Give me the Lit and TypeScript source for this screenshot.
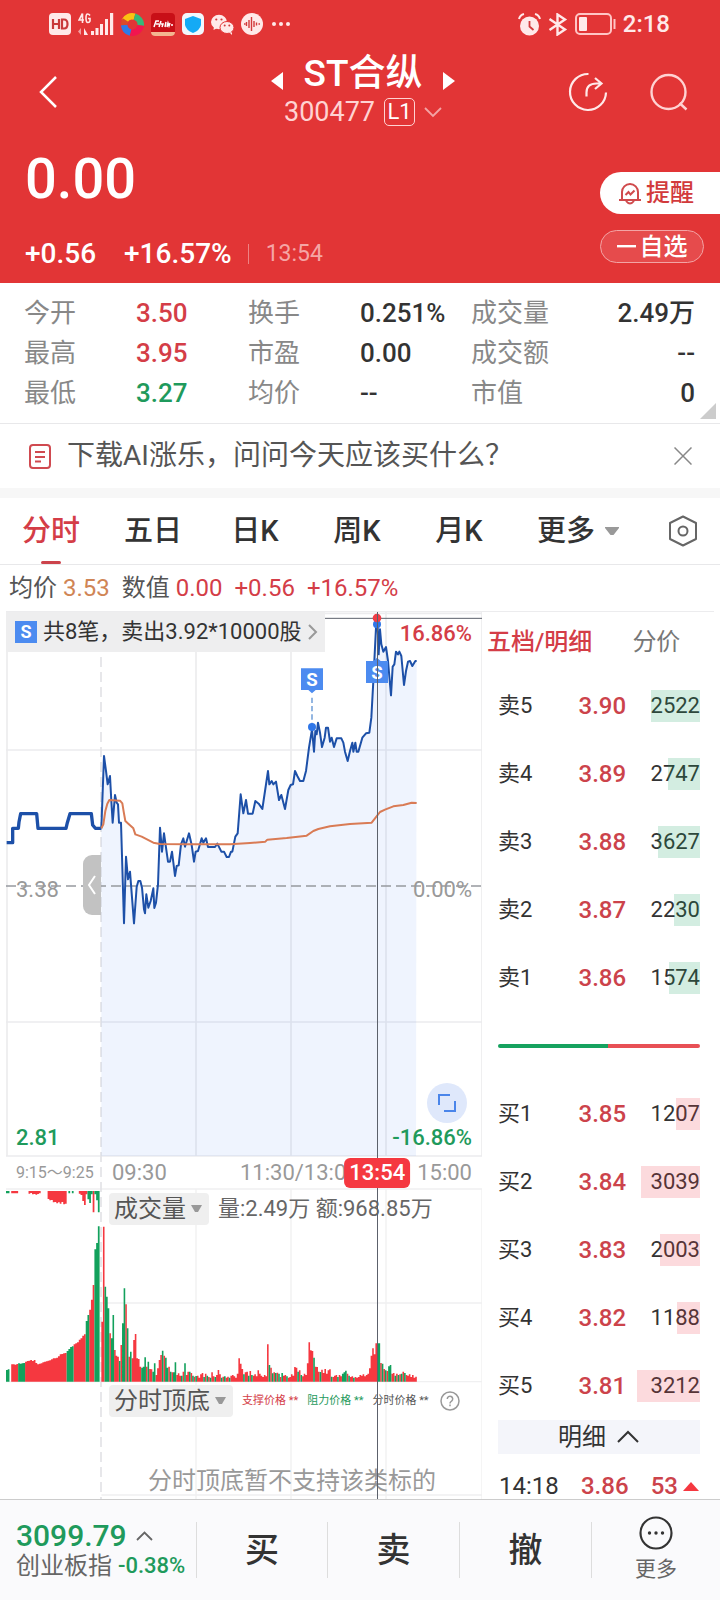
import { LitElement, html, css, svg } from "lit";
import { customElement, property, state } from "lit/decorators.js";
import { classMap } from "lit/directives/class-map.js";

type Pt = [number, number];

// Chart units: three per CSS pixel at the default width.
const AUCTION: Pt[] = [
  [20, 725], [38, 725], [38, 682], [55, 682], [57, 663], [62, 638], [110, 638], [114, 682],
  [198, 682], [202, 665], [210, 638], [274, 638], [278, 672], [286, 682], [304, 682],
];
const PRICE: Pt[] = [
  [304, 682], [312, 465], [318, 510], [323, 550], [330, 525], [334, 600], [338, 665], [345, 582],
  [350, 605], [354, 610], [357, 665], [363, 665], [372, 967], [378, 767], [384, 835], [390, 812],
  [402, 967], [410, 858], [415, 840], [421, 840], [426, 860], [432, 925], [435, 937], [439, 880],
  [445, 920], [452, 900], [460, 862], [463, 921], [468, 905], [474, 850], [480, 680], [486, 752],
  [492, 697], [498, 740], [504, 782], [510, 782], [516, 752], [525, 825], [530, 795], [536, 793],
  [543, 730], [550, 712], [555, 737], [567, 697], [575, 732], [582, 782], [587, 752], [594, 750],
  [605, 712], [610, 725], [618, 712], [624, 738], [645, 738], [652, 728], [664, 752], [672, 752],
  [680, 768], [687, 768], [693, 752], [697, 752], [706, 707], [713, 697], [722, 580], [730, 637],
  [738, 597], [744, 638], [758, 638], [766, 600], [776, 608], [787, 624], [804, 510], [808, 550],
  [815, 540], [820, 550], [828, 542], [837, 597], [844, 582], [848, 597], [855, 624], [865, 567],
  [872, 552], [879, 550], [885, 510], [892, 525], [900, 540], [910, 540], [918, 510], [927, 440],
  [936, 385], [942, 452], [946, 390], [950, 400], [954, 365], [960, 395], [966, 438], [974, 410],
  [978, 380], [984, 380], [990, 422], [995, 410], [1002, 438], [1010, 412], [1024, 412],
  [1030, 425], [1035, 452], [1043, 480], [1050, 450], [1057, 425], [1060, 452], [1066, 425],
  [1070, 452], [1075, 452], [1087, 410], [1098, 397], [1108, 395], [1114, 350], [1120, 240],
  [1125, 140], [1128, 80], [1133, 75], [1136, 160], [1140, 85], [1144, 130], [1150, 152],
  [1158, 138], [1164, 180], [1173, 283], [1178, 197], [1183, 190], [1188, 152], [1194, 160],
  [1198, 152], [1204, 165], [1212, 252], [1218, 210], [1224, 182], [1230, 180], [1237, 195],
  [1246, 180], [1250, 180],
];
const AVERAGE: Pt[] = [
  [304, 682], [310, 670], [316, 630], [322, 608], [328, 597], [360, 599], [367, 607], [371, 632],
  [376, 660], [385, 668], [400, 682], [406, 700], [425, 707], [460, 725], [480, 729], [560, 730],
  [690, 730], [750, 726], [796, 722], [802, 716], [860, 711], [920, 704], [940, 690], [955, 684],
  [990, 676], [1050, 669], [1115, 665], [1125, 652], [1140, 633], [1155, 626], [1180, 616],
  [1210, 612], [1235, 605], [1250, 606],
];

// Volume per minute; negative values are drawn green.
const VOLUME: number[] = [
  180, 465, -285, -255, -220, 145, -130, -200, 95, 78, 75, -62, 110, -175, -280, 232, -160, 75, -90, 70,
  125, 143, 70, 68, 45, -42, -45, -73, 45, -60, 38, 37, -30, -55, 20, 40, 65, 80, -93, 78,
  -72, -42, 45, -30, 28, -28, -58, 20, 25, 18, -18, 30, -55, 20, 30, -30, 26, -18, 15, -17,
  18, 12, 22, 26, -14, 24, -18, 14, -12, 28, 16, -14, 20, 35, 22, -12, 15, -16, 12, 15,
  -12, 18, 20, 16, 12, 24, 70, 54, 38, -22, 28, 30, -18, 32, -20, 18, 22, 16, 34, 24,
  18, 14, 20, 16, 112, -50, 42, -25, 28, -26, 27, -24, 14, -26, 18, 20, -16, 12, 14, 22,
  18, 44, 42, -30, 34, -20, 16, 24, 20, 55, 118, 94, 92, -72, 45, 44, 30, -29, 36, 26,
  38, 24, 34, 37, -15, 14, 18, 20, -14, 20, 16, -24, -28, -33, 24, -18, 14, 16, -12, 14,
  12, 14, 20, 18, 22, 16, 20, 24, 40, 78, 100, 82, 115, -115, -115, 56, -54, 38, -34, 32,
  -46, -50, 24, 26, -18, 24, -20, 22, -24, 30, -26, 20, 18, 22, 14, 20, 12, 15,
];
const MATCHED: number[] = [
  -35, -37, 0, 52, 52, 51, 53, -55, -54, -55, -56, 60, 62, 63, 65, 62, 65, 56, 52, 54,
  55, 58, 60, 61, 63, 64, 67, 70, 70, 72, 76, 82, 83, 85, 86, -92, -98, -104, -106, 112,
  115, 118, 126, 130, 138, 142, -182, -200, 216, 246, 290, -397, -416, -466,
];
const UNMATCHED: number[] = [
  -7, -7, 0, 7, 7, 7, 7, 0, 0, 0, 0, 0, 0, 8, 6, 10, 9, 11, 9, 7,
  0, 0, 0, 0, 24, 28, 27, 34, 33, 37, 34, 38, 33, 40, 38, 0, -7, 0, -7, 0,
  0, 0, 8, 12, 30, 42, 10, -25, -36, -10, 64, -10, -28, -64,
];

const path = (pts: Pt[]) => pts.map((p) => p.join(",")).join(" ");

const bars = (data: number[], x0: number, step: number, base: number, down = false) => {
  const draw = (sign: number) =>
    data
      .map((v, i) => {
        if (v * sign <= 0) return "";
        const h = Math.abs(v);
        const x = (x0 + i * step).toFixed(1);
        return `M${x} ${base}v${down ? h : -h}h${step}v${down ? -h : h}z`;
      })
      .join("");
  return svg`<path class="up" d=${draw(1)}></path><path class="down" d=${draw(-1)}></path>`;
};

@customElement("intraday-chart")
export class IntradayChart extends LitElement {
  static styles = css`
    :host { display: block; position: relative; color: #999; font-size: 22px; line-height: 30px; }
    button { font: inherit; color: inherit; border: 0; padding: 0; background: none; cursor: pointer; }
    .plot { position: absolute; inset: 0; width: 100%; height: 100%; }
    .grid { stroke: #ececee; stroke-width: 5; fill: none; }
    .thin { stroke: #f0f0f1; stroke-width: 4; }
    .dash { stroke: #e3e3e6; stroke-width: 5; stroke-dasharray: 30 15; }
    .mid { stroke: #97999f; stroke-width: 5; stroke-dasharray: 30 15; }
    .area { fill: #4a80f0; fill-opacity: 0.09; }
    .price { fill: none; stroke: #1d50a8; stroke-width: 6; stroke-linejoin: round; }
    .auction { stroke-width: 10; }
    .avg { fill: none; stroke: #d97b55; stroke-width: 6; stroke-linejoin: round; }
    .up { fill: #f53840; }
    .down { fill: #12a15c; }
    .tag { fill: #4c8bf0; }
    .lead { stroke: #7fa8dc; stroke-width: 5; stroke-dasharray: 16 9; }
    .dot { fill: #2f76e8; }
    .hot { fill: #f03c46; }
    .s { fill: #fff; font: 700 56px Roboto, sans-serif; text-anchor: middle; }
    .cross { position: absolute; left: 78%; top: 0; bottom: 0; width: 1px; background: #5c616b; }
    .body { position: relative; display: flex; flex-direction: column; }
    .panel { display: flex; flex-direction: column; justify-content: space-between; height: 545px; }
    .row { display: flex; justify-content: space-between; align-items: center; padding: 0 10px; }
    .top { padding-left: 0; align-items: flex-start; height: 251px; }
    .bottom { align-items: flex-end; height: 237px; padding-bottom: 4px; }
    .limit { line-height: 44px; }
    .red { color: #d43d47; }
    .green { color: #1f9a5c; }
    .num { font-weight: 500; }
    .tip { display: flex; align-items: center; gap: 6px; height: 40px; padding: 0 7px 0 9px; background: #eeeeef; color: #333; white-space: nowrap; }
    .badge { width: 22px; height: 22px; background: #4c8bf0; color: #fff; font-size: 18px; font-weight: 700; line-height: 22px; text-align: center; }
    .right { display: flex; flex-direction: column; align-items: flex-end; }
    .expand { width: 40px; height: 40px; border-radius: 20px; background: #dfe8fb; margin-right: 5px; display: grid; place-items: center; }
    .handle { position: absolute; left: 77px; top: 243px; width: 18px; height: 60px; border-radius: 9px 0 0 9px; background: #c2c2c2; display: grid; place-items: center; }
    .axis { display: grid; grid-template-columns: 96px 128px 1fr auto; align-items: center; height: 32px; padding: 0 10px; position: relative; }
    .small { font-size: 16px; }
    .now { position: absolute; left: 78%; top: 1px; transform: translateX(-50%); padding: 0 5px; border-radius: 6px; background: #f53840; color: #fff; font-weight: 500; z-index: 2; }
    .sub { display: flex; align-items: center; gap: 9px; height: 32px; padding: 4px 10px 0 103px; }
    .pick { display: flex; align-items: center; gap: 5px; height: 32px; padding: 0 7px 0 5px; border-radius: 4px; background: #efefef; color: #555; font-size: 24px; white-space: nowrap; }
    .vol { height: 192px; }
    .sum { color: #666; white-space: nowrap; }
    .key { font-size: 11px; white-space: nowrap; }
    .dark { color: #555; }
    .ind { height: 118px; display: flex; flex-direction: column; justify-content: space-between; }
    .help { display: grid; margin-left: 2px; }
    .note { padding-left: 96px; text-align: center; font-size: 24px; line-height: 36px; }
  `;

  render() {
    return html`
      <svg class="plot" viewBox="18 33 1428 2661" preserveAspectRatio="none" aria-hidden="true">
        <path class="grid" d="M18 37H1446M18 447H1446M18 1263H1446M18 1665H1446M21 33V1665M588 33V1665M873 33V1665M1158 33V1665M1446 33V1665"></path>
        <path class="thin" d="M18 1764H1446M304 2106H1446M18 2342H1446M304 2682H1446M588 1764V2694M873 1764V2694M1158 1764V2694M1446 1764V2694"></path>
        <path class="dash" d="M303 33V2694"></path>
        <polygon class="area" points="304,1665 ${path(PRICE)} 1248,1665"></polygon>
        <path class="mid" d="M18 855H1446"></path>
        <path d="M18 52H1446" stroke="#5c616b" stroke-width="3"></path>
        <polyline class="price auction" points=${path(AUCTION)}></polyline>
        <polyline class="price" points=${path(PRICE)}></polyline>
        <polyline class="avg" points=${path(AVERAGE)}></polyline>
        ${bars(UNMATCHED, 18, 5.2, 1770, true)} ${bars(MATCHED, 18, 5.2, 2342)}
        ${bars(VOLUME, 304, 4.78, 2342)}
        <path class="lead" d="M936 290V370"></path>
        <circle class="dot" cx="936" cy="378" r="12"></circle>
        <path class="tag" d="M903 202h66v65h-22l-11 10l-11-10h-22z"></path>
        <text class="s" x="936" y="254">S</text>
        <circle class="dot" cx="1131" cy="70" r="12"></circle>
        <circle class="hot" cx="1131" cy="51" r="13"></circle>
        <path class="tag" d="M1098 180h22l11-10l11 10h22v66h-66z"></path>
        <text class="s" x="1131" y="233">S</text>
      </svg>
      <div class="body">
        <div class="panel">
          <div class="row top">
            <button class="tip">
              <span class="badge">S</span>共8笔，卖出3.92*10000股
              <svg width="10" height="18" viewBox="0 0 10 18" fill="none" stroke="#999" stroke-width="2"><path d="M1 2l7 7-7 7"></path></svg>
            </button>
            <span class="num red limit">16.86%</span>
          </div>
          <div class="row"><span>3.38</span><span>0.00%</span></div>
          <div class="row bottom">
            <span class="num green">2.81</span>
            <div class="right">
              <button class="expand" aria-label="全屏">
                <svg width="20" height="20" viewBox="0 0 20 20" fill="none" stroke="#4a85ea" stroke-width="2"><path d="M2 12V2h11M18 8v10H7"></path></svg>
              </button>
              <span class="num green">-16.86%</span>
            </div>
          </div>
        </div>
        <div class="axis">
          <span class="small">9:15～9:25</span><span>09:30</span><span>11:30/13:00</span><span>15:00</span>
          <span class="now">13:54</span>
        </div>
        <div class="vol">
          <div class="sub">
            <button class="pick">成交量 <svg width="11" height="8" viewBox="0 0 11 8" fill="#999"><path d="M0 0h11L7 7H4z"></path></svg></button>
            <span class="sum">量:2.49万 额:968.85万</span>
          </div>
        </div>
        <div class="ind">
          <div class="sub">
            <button class="pick">分时顶底 <svg width="11" height="8" viewBox="0 0 11 8" fill="#999"><path d="M0 0h11L7 7H4z"></path></svg></button>
            <span class="key red">支撑价格 **</span>
            <span class="key green">阻力价格 **</span>
            <span class="key dark">分时价格 **</span>
            <button class="help" aria-label="说明">
              <svg width="20" height="20" viewBox="0 0 20 20" fill="none" stroke="#999" stroke-width="1.5"><circle cx="10" cy="10" r="9"></circle><path d="M7.3 8a2.7 2.7 0 1 1 4.3 2.1c-1 .8-1.6 1.2-1.6 2.3M10 13.6v1.6"></path></svg>
            </button>
          </div>
          <div class="note">分时顶底暂不支持该类标的</div>
        </div>
      </div>
      <div class="cross"></div>
      <button class="handle" aria-label="收起">
        <svg width="10" height="20" viewBox="0 0 10 20" fill="none" stroke="#fff" stroke-width="2"><path d="M8 1L2 10l6 9"></path></svg>
      </button>
    `;
  }
}

interface Level { name: string; price: string; qty: number; bar: number; }

const SELL: Level[] = [
  { name: "卖5", price: "3.90", qty: 2522, bar: 49 },
  { name: "卖4", price: "3.89", qty: 2747, bar: 32 },
  { name: "卖3", price: "3.88", qty: 3627, bar: 42 },
  { name: "卖2", price: "3.87", qty: 2230, bar: 26 },
  { name: "卖1", price: "3.86", qty: 1574, bar: 31 },
];
const BUY: Level[] = [
  { name: "买1", price: "3.85", qty: 1207, bar: 24 },
  { name: "买2", price: "3.84", qty: 3039, bar: 59 },
  { name: "买3", price: "3.83", qty: 2003, bar: 40 },
  { name: "买4", price: "3.82", qty: 1188, bar: 23 },
  { name: "买5", price: "3.81", qty: 3212, bar: 63 },
];

@customElement("order-book")
export class OrderBook extends LitElement {
  static styles = css`
    :host { display: block; color: #333; font-size: 22px; line-height: 32px; }
    button { font: inherit; color: inherit; border: 0; padding: 0; background: none; cursor: pointer; }
    .tabs { display: flex; gap: 40px; height: 60px; padding-left: 5px; align-items: center; font-size: 24px; color: #777; white-space: nowrap; }
    .tabs .on { color: #d43d47; font-weight: 500; }
    .list { padding: 0 14px 0 16px; }
    table { width: 100%; border-collapse: collapse; }
    td { height: 68px; padding: 0; }
    .price { color: #cc434b; font-size: 24px; font-weight: 500; text-align: center; padding-left: 26px; }
    .qty { text-align: right; }
    .cell { position: relative; display: block; }
    .bar { position: absolute; right: 0; top: 0; height: 32px; }
    .sell .bar { background: rgba(20, 160, 95, 0.19); }
    .buy .bar { background: rgba(240, 60, 75, 0.19); }
    .ratio { display: flex; height: 4px; margin: 32px 0; border-radius: 2px; overflow: hidden; }
    .a { flex: 55; background: #16a25f; }
    .b { flex: 46; background: #e85055; }
    .more { display: flex; align-items: center; justify-content: center; gap: 10px; width: 100%; height: 34px; background: #f4f5fa; font-size: 24px; }
    .trade { display: flex; justify-content: space-between; align-items: center; height: 24px; padding: 20px 1px 0 1px; font-size: 24px; line-height: 24px; }
    .red { color: #cc434b; font-weight: 500; }
    .vol { display: flex; align-items: center; gap: 5px; }
  `;

  private levels(rows: Level[], side: string) {
    return html`<table class=${side}>
      <tbody>
        ${rows.map((r) => html`<tr>
          <td>${r.name}</td>
          <td class="price">${r.price}</td>
          <td class="qty"><span class="cell">${r.qty}<span class="bar" style="width:${r.bar}px"></span></span></td>
        </tr>`)}
      </tbody>
    </table>`;
  }

  render() {
    return html`
      <div class="tabs"><button class="on">五档/明细</button><button>分价</button></div>
      <div class="list">
        ${this.levels(SELL, "sell")}
        <div class="ratio"><span class="a"></span><span class="b"></span></div>
        ${this.levels(BUY, "buy")}
        <button class="more">明细
          <svg width="24" height="14" viewBox="0 0 24 14" fill="none" stroke="#333" stroke-width="2"><path d="M2 12L12 2l10 10"></path></svg>
        </button>
        <div class="trade">
          <span>14:18</span><span class="red">3.86</span>
          <span class="red vol">53 <svg width="16" height="9" viewBox="0 0 16 9" fill="#f53840"><path d="M8 0l8 9H0z"></path></svg></span>
        </div>
      </div>
    `;
  }
}

@customElement("app-root")
export class AppRoot extends LitElement {
  @property() name = "ST合纵";
  @state() private tab = 0;

  static styles = css`
    :host { display: flex; flex-direction: column; min-height: 100vh; background: #fff; color: #333; font-family: Roboto, "Noto Sans CJK SC", sans-serif; font-size: 26px; line-height: 40px; }
    button { font: inherit; color: inherit; border: 0; padding: 0; background: none; cursor: pointer; }
    svg { display: block; flex: none; }
    .head { background: #e23536; color: #fff; padding-bottom: 9px; }
    .status { display: flex; align-items: center; height: 48px; padding: 0 50px 0 49px; gap: 7px; }
    .clock { font-size: 24px; font-weight: 500; color: #ffe9e9; }
    .push { margin-left: auto; }
    .nav { display: grid; grid-template-columns: 1fr auto 1fr; align-items: center; height: 88px; padding: 0 32px 0 38px; }
    .title { display: flex; align-items: flex-start; gap: 1px; }
    .arrow { padding-top: 18px; }
    .names { text-align: center; }
    h1 { margin: 0; font-size: 37px; line-height: 40px; font-weight: 500; }
    .code { display: flex; align-items: center; gap: 9px; font-size: 27px; line-height: 36px; color: #ffd2d2; }
    .lv { border: 1px solid #ffd2d2; border-radius: 5px; width: 29px; font-size: 22px; line-height: 26px; color: #fff; }
    .tools { display: flex; justify-content: flex-end; gap: 42px; }
    .quote { display: flex; justify-content: space-between; padding-left: 25px; }
    .last { font-size: 56px; line-height: 56px; font-weight: 500; padding-top: 15px; }
    .chg { display: flex; align-items: center; gap: 28px; padding-top: 27px; font-size: 28px; font-weight: 500; line-height: 40px; }
    .time { border-left: 1px solid #ee8384; margin-left: -12px; padding-left: 17px; font-size: 23px; line-height: 20px; font-weight: 400; color: #f5a5a5; }
    .acts { display: flex; flex-direction: column; align-items: flex-start; gap: 16px; padding-top: 36px; width: 120px; font-size: 24px; font-weight: 500; }
    .remind { display: flex; align-items: center; gap: 5px; width: 120px; height: 42px; padding-left: 19px; box-sizing: border-box; border-radius: 21px 0 0 21px; background: #fff; color: #d23a3c; white-space: nowrap; }
    .fav { display: flex; align-items: center; justify-content: center; gap: 4px; width: 104px; height: 33px; box-sizing: border-box; border: 1px solid #f3a4a5; border-radius: 17px; background: #e64b4c; line-height: 30px; white-space: nowrap; }
    .stats { display: grid; grid-template-columns: 112fr 112fr 112fr 111fr 224fr; margin: 0; padding: 10px 25px 10px 24px; border-bottom: 1px solid #e8e8ea; position: relative; }
    .stats > * { display: flex; justify-content: space-between; white-space: nowrap; }
    .lab { color: #888; }
    .num { font-weight: 500; }
    .red { color: #d43d47; }
    .green { color: #1f9a5c; }
    .fold { position: absolute; right: 4px; bottom: 4px; }
    .banner { display: flex; align-items: center; height: 64px; padding: 0 28px 0 29px; gap: 16px; font-size: 28px; color: #555; border-bottom: 10px solid #f7f7f7; }
    .tabs { display: grid; grid-template-columns: 102fr 102fr 102fr 102fr 102fr 136fr 74fr; height: 66px; border-bottom: 1px solid #e8e8ea; font-size: 29px; font-weight: 500; white-space: nowrap; }
    .tabs button { display: flex; align-items: center; justify-content: center; gap: 10px; position: relative; }
    .tabs .on { color: #d43d47; }
    .tabs .on::after { content: ""; position: absolute; bottom: 0; left: 50%; width: 20px; height: 3px; margin-left: -10px; border-radius: 2px; background: #cc434b; }
    .legend { display: flex; gap: 12px; padding: 3px 9px 4px; font-size: 24px; }
    .legend span { white-space: pre; }
    .gray { color: #555; }
    .avg { color: #d08555; }
    .main { display: flex; height: 887px; overflow: hidden; margin: -1px 6px 0; border-top: 1px solid #ececee; }
    intraday-chart { flex: 476; }
    order-book { flex: 232; }
    .foot { position: sticky; bottom: 0; z-index: 3; display: grid; grid-template-columns: 196fr 131fr 132fr 132fr 129fr; align-items: center; height: 100px; border-top: 1px solid #ccc; background: #fafafc; flex: none; }
    .foot > * { height: 56px; border-left: 1px solid #ddd; }
    .foot > :first-child { border: 0; text-align: left; padding-left: 16px; }
    .idx { display: flex; align-items: center; gap: 9px; font-size: 30px; line-height: 28px; font-weight: 500; }
    .idn { display: flex; gap: 6px; font-size: 24px; line-height: 32px; color: #666; white-space: nowrap; }
    .pct { font-size: 22px; font-weight: 500; }
    .act { font-size: 34px; font-weight: 500; line-height: 56px; }
    .foot .etc { display: flex; flex-direction: column; align-items: center; justify-content: center; font-size: 21px; line-height: 30px; color: #666; gap: 4px; }
  `;

  private statusBar() {
    return html`<div class="status">
      <svg width="22" height="22" viewBox="0 0 22 22"><rect width="22" height="22" rx="4" fill="#ffe9e9"></rect><path d="M4 6v10M10 6v10M4 11h6M13 6.500v9h2q3.500 0 3.500-4.500T15 6.500z" fill="none" stroke="#c9393b" stroke-width="2.200"></path></svg>
      <svg width="36" height="24" viewBox="0 0 36 24" fill="#ffe9e9"><path d="M13 19h3v4h-3zM17.500 16h3v7h-3zM22 12h3v11h-3zM27 7h3v16h-3zM32 1h3.200v22H32z"></path><path d="M3 16v7l-3-3.500z" fill="#f3a0a0"></path><path d="M6 16v7h4z"></path><path d="M4.500 1.500L1 8h5M4.500 1.500V11M12 3.500Q11 2 9.500 2 8 2 8 6.200T9.800 10.500 12 9V6.500h-2" fill="none" stroke="#ffe9e9" stroke-width="1.600"></path></svg>
      <svg width="23" height="23" viewBox="0 0 23 23" fill="none" stroke-width="6.500"><path d="M3.500 8A8.500 8.500 0 0 1 13.500 3.700" stroke="#fbc212"></path><path d="M13.500 3.700A8.500 8.500 0 0 1 19.800 12.500" stroke="#35b878"></path><path d="M19.800 12.500A8.500 8.500 0 0 1 9.500 19.500" stroke="#f2154f"></path><path d="M9.500 19.500A8.500 8.500 0 0 1 3.200 12" stroke="#2c7be8"></path><path d="M3.200 12A8.500 8.500 0 0 1 4.500 7" stroke="#d94a2b"></path></svg>
      <svg width="24" height="23" viewBox="0 0 24 23"><rect width="24" height="23" rx="4" fill="#c80f17"></rect><path d="M0 19h24q0 4-4 4H4q-4 0-4-4z" fill="#f4b690"></path><path d="M3 14l2-6h3M5 11h3M8 14l2-6M10 11h2l-1 3M14 14l1-5M16 14l1-4 1 3 1-3M20 12h2" fill="none" stroke="#fff" stroke-width="1.500"></path></svg>
      <svg width="22" height="22" viewBox="0 0 22 22"><rect width="22" height="22" rx="5" fill="#f2f7fd"></rect><path d="M11 3l8 3v6q-1 5-8 8-7-3-8-8V6z" fill="#14aaf5"></path></svg>
      <svg width="23" height="21" viewBox="0 0 23 21" fill="#ffe9e9"><ellipse cx="8" cy="8" rx="8" ry="7.200"></ellipse><path d="M3 12l-.500 4 4-2z"></path><ellipse cx="16" cy="13.500" rx="7" ry="6" stroke="#e23536"></ellipse><path d="M18 18l3 .5v2.500z"></path><g fill="#d23a3c"><circle cx="5.300" cy="5.500" r="1.100"></circle><circle cx="10.500" cy="5.500" r="1.100"></circle><circle cx="13.700" cy="11.500" r="1"></circle><circle cx="18.300" cy="11.500" r="1"></circle></g></svg>
      <svg width="22" height="22" viewBox="0 0 22 22"><circle cx="11" cy="11" r="11" fill="#ffe9e9"></circle><path d="M3 11h1.500M5.500 9v4M8 7v8M10.500 4v14M13 8v6M15.500 9.500v3M17.500 11H19" stroke="#d23a3c" stroke-width="1.400"></path></svg>
      <svg width="20" height="6" viewBox="0 0 20 6" fill="#ffe9e9"><circle cx="4" cy="3" r="2"></circle><circle cx="11" cy="3" r="2"></circle><circle cx="18" cy="3" r="2"></circle></svg>
      <svg class="push" width="23" height="23" viewBox="0 0 23 23"><circle cx="11.500" cy="13" r="9.500" fill="#ffe9e9"></circle><path d="M1 6q1-4 5-5M22 6q-1-4-5-5" fill="none" stroke="#ffe9e9" stroke-width="2"></path><path d="M11.500 8v5.500l4 3.500" fill="none" stroke="#d23a3c" stroke-width="1.800"></path></svg>
      <svg width="20" height="23" viewBox="0 0 20 23" fill="none" stroke="#ffe9e9" stroke-width="2.400"><path d="M1.500 6L17 16.500 9.500 21.500v-20L17 6.500 1.500 17"></path></svg>
      <svg width="41" height="22" viewBox="0 0 41 22"><rect x="1" y="1" width="35" height="20" rx="4" fill="none" stroke="#ffc5c5" stroke-width="2"></rect><rect x="4" y="4" width="8" height="14" rx="1" fill="#ffe9e9"></rect><path d="M39.500 6v10" stroke="#ffc5c5" stroke-width="2"></path></svg>
      <span class="clock">2:18</span>
    </div>`;
  }

  private stats() {
    const rows = [
      ["今开", "3.50", "red", "换手", "0.251%", "成交量", "2.49万"],
      ["最高", "3.95", "red", "市盈", "0.00", "成交额", "--"],
      ["最低", "3.27", "green", "均价", "--", "市值", "0"],
    ];
    return html`<section class="stats">
      ${rows.map((r) => html`
        <span class="lab">${r[0]}</span><span class="num ${r[2]}">${r[1]}</span>
        <span class="lab">${r[3]}</span><span class="num">${r[4]}</span>
        <span><span class="lab">${r[5]}</span><span class="num">${r[6]}</span></span>`)}
      <svg class="fold" width="16" height="16" viewBox="0 0 16 16" fill="#ccc"><path d="M16 0v16H0z"></path></svg>
    </section>`;
  }

  render() {
    const tabs = ["分时", "五日", "日K", "周K", "月K"];
    return html`
      <header class="head">
        ${this.statusBar()}
        <nav class="nav">
          <button aria-label="返回"><svg width="20" height="34" viewBox="0 0 20 34" fill="none" stroke="#fff" stroke-width="2.500"><path d="M18 2L3 17l15 15"></path></svg></button>
          <div class="title">
            <button class="arrow" aria-label="上一只"><svg width="12" height="18" viewBox="0 0 12 18" fill="#fff"><path d="M12 0v18L0 9z"></path></svg></button>
            <div class="names">
              <h1>${this.name}</h1>
              <div class="code">300477<span class="lv">L1</span><svg width="18" height="11" viewBox="0 0 18 11" fill="none" stroke="#f3a4a5" stroke-width="1.800"><path d="M1 1l8 8 8-8"></path></svg></div>
            </div>
            <button class="arrow" aria-label="下一只"><svg width="12" height="18" viewBox="0 0 12 18" fill="#fff"><path d="M0 0v18l12-9z"></path></svg></button>
          </div>
          <div class="tools">
            <button aria-label="分享"><svg width="40" height="40" viewBox="0 0 40 40" fill="none" stroke="#ffe9e9" stroke-width="2.200"><path d="M20.500 2A18 18 0 1 0 38 20.500"></path><path d="M18.500 24.500v-4q0-9 10-9h5M27 6l6.500 5.500-6.500 5.500"></path></svg></button>
            <button aria-label="搜索"><svg width="38" height="40" viewBox="0 0 38 40" fill="none" stroke="#ffd2d2" stroke-width="2.400"><circle cx="18.500" cy="20" r="17"></circle><path d="M29.500 31l7 6.500"></path></svg></button>
          </div>
        </nav>
        <div class="quote">
          <div>
            <div class="last">0.00</div>
            <div class="chg"><span>+0.56</span><span>+16.57%</span><span class="time">13:54</span></div>
          </div>
          <div class="acts">
            <button class="remind"><svg width="22" height="24" viewBox="0 0 22 24" fill="none" stroke="#d04a4c" stroke-width="2"><path d="M3 19v-8a8 8 0 0 1 16 0v8M0 19h22M7 20q4 5 8 0M6.500 14l3-3 2 2.500 4-4"></path></svg>提醒</button>
            <button class="fav"><svg width="19" height="3" viewBox="0 0 19 3"><rect width="19" height="2.400" fill="#fff"></rect></svg>自选</button>
          </div>
        </div>
      </header>
      ${this.stats()}
      <div class="banner">
        <svg width="22" height="25" viewBox="0 0 22 25" fill="none" stroke="#d04a50" stroke-width="2"><rect x="1" y="1" width="20" height="23" rx="3"></rect><path d="M6 8h10M6 13h10M6 17.500h6"></path></svg>
        <span>下载AI涨乐，问问今天应该买什么？</span>
        <button class="push" aria-label="关闭"><svg width="18" height="18" viewBox="0 0 18 18" fill="none" stroke="#888" stroke-width="1.500"><path d="M.5.500l17 17M17.500.500l-17 17"></path></svg></button>
      </div>
      <nav class="tabs">
        ${tabs.map((t, i) => html`<button class=${classMap({ on: i === this.tab })} @click=${() => (this.tab = i)}>${t}</button>`)}
        <button>更多<svg width="14" height="9" viewBox="0 0 14 9" fill="#999"><path d="M0 0h14v1L8.500 8h-3L0 1z"></path></svg></button>
        <button aria-label="设置"><svg width="30" height="32" viewBox="0 0 30 32" fill="none" stroke="#666" stroke-width="2"><path d="M15 1.500L28 8v16l-13 6.500L2 24V8z" stroke-linejoin="round"></path><circle cx="15" cy="16" r="4.500"></circle></svg></button>
      </nav>
      <div class="legend">
        <span class="gray">均价 <span class="avg">3.53</span></span>
        <span class="gray">数值 <span class="red">0.00</span></span>
        <span class="red">+0.56</span><span class="red">+16.57%</span>
      </div>
      <main class="main">
        <intraday-chart></intraday-chart>
        <order-book></order-book>
      </main>
      <footer class="foot">
        <button>
          <span class="idx green">3099.79<svg width="17" height="10" viewBox="0 0 17 10" fill="none" stroke="#666" stroke-width="1.800"><path d="M1 9l7.500-7.500L16 9"></path></svg></span>
          <span class="idn">创业板指<span class="pct green">-0.38%</span></span>
        </button>
        <button class="act">买</button><button class="act">卖</button><button class="act">撤</button>
        <button class="etc"><svg width="34" height="34" viewBox="0 0 34 34"><circle cx="17" cy="17" r="15.500" fill="none" stroke="#333" stroke-width="2.200"></circle><g fill="#333"><circle cx="10.500" cy="17" r="1.700"></circle><circle cx="17" cy="17" r="1.700"></circle><circle cx="23.500" cy="17" r="1.700"></circle></g></svg>更多</button>
      </footer>
    `;
  }
}
